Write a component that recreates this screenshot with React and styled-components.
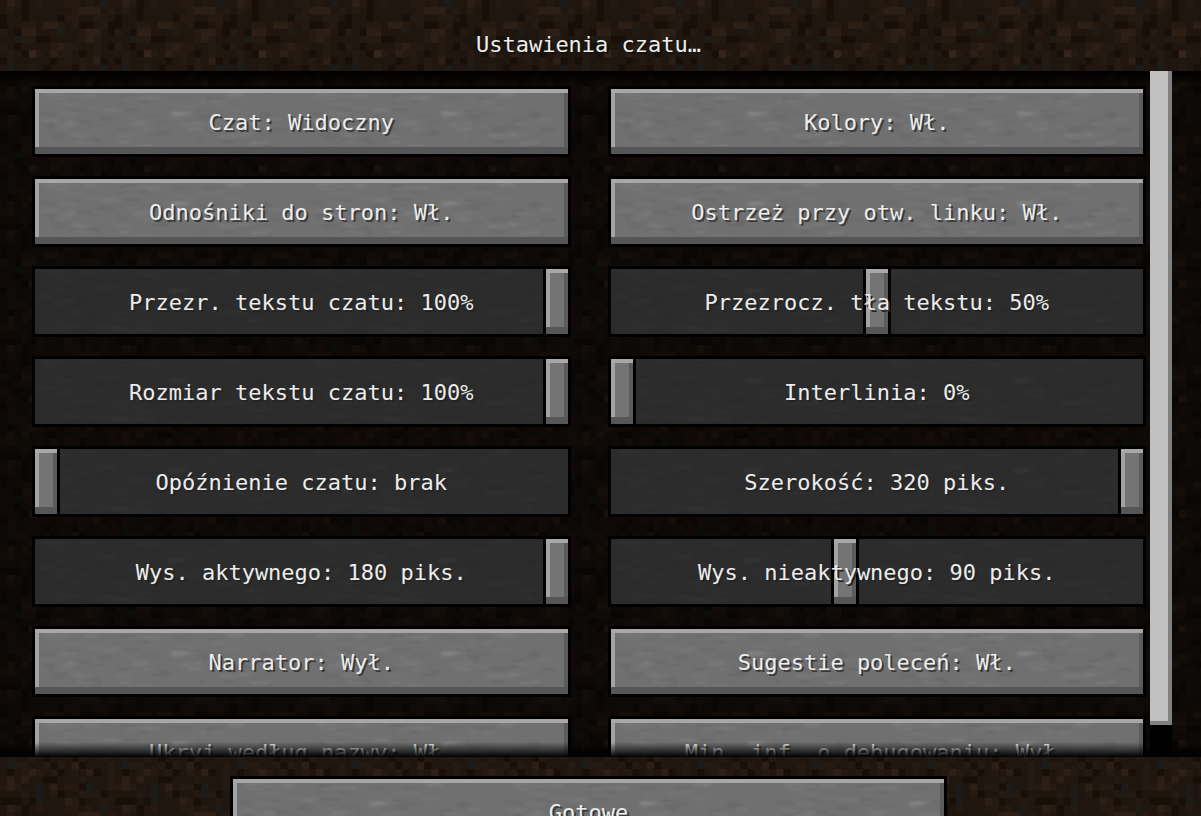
import React, { useState } from "react";
import styled, { createGlobalStyle, css } from "styled-components";

const DIRT = [
  "bdcabcbbbccbcbsb",
  "bcbabbbbbbcdddbc",
  "abbabbbbaccbbccb",
  "abbccbddcbcaabca",
  "cbaddbbbsbbcddba",
  "bbsccaabbbbcdcbb",
  "cbabbbbcdccbbcba",
  "bcbapcbdccbabcbb",
  "acbbbbbabcbcbdab",
  "bsbbcbabbbacbbsb",
  "bsccbbcacbdabbbc",
  "babcdcbcabcbdabc",
  "bdbdbbaabbbcbbbc",
  "cdcbbsbdbccasbbc",
  "bbbcbsbcabbcscab",
  "aaabasbbbdcabbcb",
];
const SHADES = {
  a: "#170f08",
  b: "#1e160f",
  c: "#251a12",
  d: "#2c1f16",
  s: "#1c1b18",
  p: "#35251d",
};

const svgUrl = (width, height, body) =>
  `url("data:image/svg+xml,${encodeURIComponent(
    `<svg xmlns="http://www.w3.org/2000/svg" width="${width}" height="${height}" viewBox="0 0 ${width} ${height}">${body}</svg>`
  )}")`;

const dirt = svgUrl(
  160,
  160,
  DIRT.map((row, y) =>
    [...row]
      .map(
        (key, x) =>
          `<rect x="${x * 10}" y="${y * 10}" width="11" height="11" fill="${SHADES[key]}"/>`
      )
      .join("")
  ).join("")
);

// short horizontal streaks, always the same ones
const makeStreaks = () => {
  let seed = 11;
  const next = (max) => {
    seed = (seed * 16807) % 2147483647;
    return seed % max;
  };
  let body = "";
  for (let i = 0; i < 150; i++) {
    const fill = i % 2 ? "#fff" : "#000";
    const opacity = (2 + next(5)) / 100;
    body += `<rect x="${next(250)}" y="${next(68)}" width="${4 + next(16)}" height="${2 + next(3)}" fill="${fill}" opacity="${opacity}"/>`;
  }
  return `<filter id="soft"><feGaussianBlur stdDeviation="2 1"/></filter><g filter="url(#soft)">${body}</g>`;
};
const stone = svgUrl(270, 71, makeStreaks());

const OPTIONS = [
  { id: "chat", name: "Czat", values: ["Widoczny", "Ukryty"] },
  { id: "colors", name: "Kolory", values: ["Wł.", "Wył."] },
  { id: "links", name: "Odnośniki do stron", values: ["Wł.", "Wył."] },
  { id: "prompt", name: "Ostrzeż przy otw. linku", values: ["Wł.", "Wył."] },
  { id: "opacity", name: "Przezr. tekstu czatu", min: 0, max: 100, value: 100, unit: "%" },
  { id: "background", name: "Przezrocz. tła tekstu", min: 0, max: 100, value: 50, unit: "%" },
  { id: "scale", name: "Rozmiar tekstu czatu", min: 0, max: 100, value: 100, unit: "%" },
  { id: "spacing", name: "Interlinia", min: 0, max: 100, value: 0, unit: "%" },
  { id: "delay", name: "Opóźnienie czatu", min: 0, max: 6, value: 0, unit: " s", zero: "brak" },
  { id: "width", name: "Szerokość", min: 40, max: 320, value: 320, unit: " piks." },
  { id: "focused", name: "Wys. aktywnego", min: 20, max: 180, value: 180, unit: " piks." },
  { id: "unfocused", name: "Wys. nieaktywnego", min: 20, max: 180, value: 90, unit: " piks." },
  { id: "narrator", name: "Narrator", values: ["Wył.", "Wł."] },
  { id: "suggestions", name: "Sugestie poleceń", values: ["Wł.", "Wył."] },
  { id: "hide", name: "Ukryj według nazwy", values: ["Wł.", "Wył."] },
  { id: "debug", name: "Min. inf. o debugowaniu", values: ["Wył.", "Wł."] },
];

const Toggle = ({ name, values }) => {
  const [index, setIndex] = useState(0);
  return (
    <StoneButton
      type="button"
      onClick={() => setIndex((index + 1) % values.length)}
    >
      {`${name}: ${values[index]}`}
    </StoneButton>
  );
};

const Slider = ({ id, name, min, max, value, unit, zero }) => {
  const [current, setCurrent] = useState(value);
  const text = zero && current === 0 ? zero : `${current}${unit}`;
  return (
    <SliderBox>
      <Range
        id={id}
        type="range"
        min={min}
        max={max}
        value={current}
        onChange={(e) => setCurrent(Number(e.target.value))}
      />
      <SliderLabel htmlFor={id}>{`${name}: ${text}`}</SliderLabel>
    </SliderBox>
  );
};

const App = () => {
  return (
    <Screen>
      <GlobalStyle />
      <Header>
        <Title>Ustawienia czatu…</Title>
      </Header>
      <ListArea>
        <Options>
          {OPTIONS.map((option) =>
            option.values ? (
              <Toggle key={option.id} {...option} />
            ) : (
              <Slider key={option.id} {...option} />
            )
          )}
        </Options>
        <ScrollTrack>
          <ScrollThumb />
        </ScrollTrack>
      </ListArea>
      <Footer>
        <DoneButton type="button">Gotowe</DoneButton>
      </Footer>
    </Screen>
  );
};

const GlobalStyle = createGlobalStyle`
  * {
    box-sizing: border-box;
  }
  body {
    margin: 0;
    background: #000;
  }
`;

const pixelText = css`
  font-family: "DejaVu Sans Mono", "Liberation Mono", monospace;
  font-size: 22px;
  font-weight: 400;
  line-height: 26px;
  color: #ececec;
  white-space: nowrap;
`;

const bevel = css`
  border: 3px solid #000;
  box-shadow:
    inset 0 4px #a9a7a7,
    inset 0 -7px #565656,
    inset 4px 0 #a3a3a3,
    inset -4px 0 #5c5c5c;
`;

const Screen = styled.div`
  display: grid;
  grid-template-rows: 71px 1fr 59px;
  height: 100vh;
  overflow: hidden;
  background-image: ${dirt};
  background-size: 115px 115px;
`;

const Header = styled.header`
  display: flex;
  justify-content: center;
  padding: 32px 24px 0 0;
`;

const Title = styled.h1`
  ${pixelText}
  margin: 0;
  text-shadow: 2px 2px #15110e;
`;

const ListArea = styled.main`
  position: relative;
  display: flex;
  gap: 4px;
  min-height: 0;
  overflow: hidden;
  padding: 0 29px 0 32px;
  background-color: rgba(0, 0, 0, 0.55);

  &::after {
    content: "";
    position: absolute;
    inset: 0;
    pointer-events: none;
    background:
      linear-gradient(#000, transparent) top / 100% 15px no-repeat,
      linear-gradient(transparent, #000) bottom / 100% 15px no-repeat;
  }
`;

const Options = styled.div`
  flex: 1;
  display: grid;
  grid-template-columns: 1fr 1fr;
  grid-auto-rows: 71px;
  align-content: start;
  gap: 19px 37px;
  padding-top: 15px;
`;

const StoneButton = styled.button`
  ${pixelText}
  ${bevel}
  width: 100%;
  height: 71px;
  padding: 3px 0 0;
  border-radius: 0;
  background: #707070 ${stone};
  text-shadow: 2px 2px #3a3a3a;
  cursor: pointer;
`;

const SliderBox = styled.div`
  display: grid;
  background: #2c2c2c ${stone};
  background-blend-mode: soft-light;
  border-radius: 0;
`;

const thumb = css`
  appearance: none;
  ${bevel}
  box-sizing: border-box;
  width: 28px;
  height: 71px;
  border-radius: 0;
  background: #747474;
`;

const Range = styled.input`
  appearance: none;
  grid-area: 1 / 1;
  width: 100%;
  height: 71px;
  margin: 0;
  background: transparent;
  box-shadow: inset 0 0 0 3px #000;
  cursor: pointer;

  &::-webkit-slider-thumb {
    ${thumb}
  }
  &::-moz-range-thumb {
    ${thumb}
  }
`;

const SliderLabel = styled.label`
  ${pixelText}
  grid-area: 1 / 1;
  z-index: 1;
  place-self: center;
  padding-top: 3px;
  text-shadow: 2px 2px #242424;
  pointer-events: none;
`;

const ScrollTrack = styled.div`
  z-index: 1;
  width: 22px;
  padding-bottom: 32px;
  background: #000;
`;

const ScrollThumb = styled.div`
  height: 100%;
  background: #c0c0c0;
  box-shadow: inset -4px -4px #808080;
`;

const Footer = styled.footer`
  display: flex;
  justify-content: center;
  align-items: flex-start;
  overflow: hidden;
  padding: 19px 24px 0 0;
`;

const DoneButton = styled(StoneButton)`
  flex: none;
  width: 61%;
`;

export default App;
